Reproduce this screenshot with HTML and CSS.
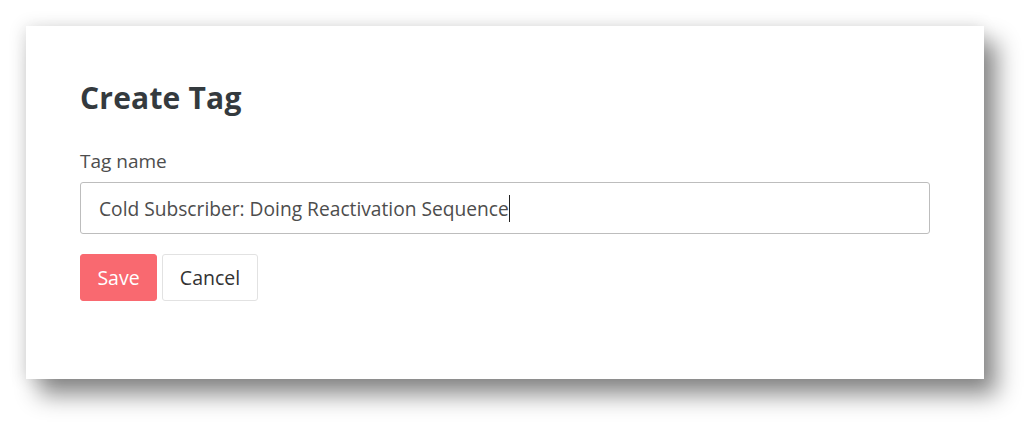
FILE: index.html
```html
<!doctype html>
<html>
  <head>
    <title>Create Tag</title>
    <link rel="stylesheet" href="styles.css">
  </head>
  <body>
    <div class="modal">
      <h1 class="modal-title">Create Tag</h1>
      <label class="field-label" for="tag-name">Tag name</label>
      <div class="field-input">
        <span class="field-value">Cold Subscriber: Doing Reactivation Sequence</span><span class="caret"></span>
      </div>
      <div class="actions">
        <button class="btn btn-save">Save</button>
        <button class="btn btn-cancel">Cancel</button>
      </div>
    </div>
  </body>
</html>
```

FILE: styles.css
```css
* { margin: 0; padding: 0; box-sizing: border-box; }
html, body { background: #fff; }
body { font-family: "Open Sans", "Noto Sans", sans-serif; color: #444; padding: 26px 0 0 26px; min-height: 431px; }

.modal {
  width: 958px;
  height: 353px;
  background: #fff;
  padding: 52px 54px 0 54px;
  box-shadow: 13px 16px 22px rgba(0,0,0,0.45), -2px 0 16px rgba(0,0,0,0.12);
}

.modal-title { font-size: 30px; font-weight: 700; color: #343a3e; line-height: 40px; letter-spacing: 0.2px; }

.field-label { display: block; font-size: 19px; color: #4d4d4d; margin-top: 30px; line-height: 26px; }

.field-input {
  display: flex;
  align-items: center;
  width: 850px;
  height: 52px;
  margin-top: 8px;
  padding-left: 18px;
  border: 1px solid #bdbdbd;
  border-radius: 3px;
  font-size: 19.2px;
  color: #4d4d4d;
}
.caret { display: inline-block; width: 1px; height: 27px; background: #222; }

.actions { display: flex; gap: 5px; margin-top: 20px; }
.btn { font-family: inherit; font-size: 19.5px; height: 47px; border-radius: 3px; cursor: pointer; }
.btn-save { width: 77px; background: #f96970; border: 1px solid #f96970; color: #fff; }
.btn-cancel { width: 96px; background: #fff; border: 1px solid #e2e2e2; color: #333; }
```
